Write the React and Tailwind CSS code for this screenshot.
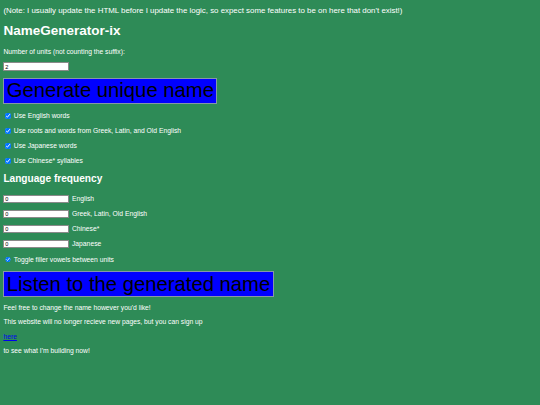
import React from 'react';

const Check = ({ label, first }) => (
    <div className={`flex items-center h-[8px] ${first ? 'mt-[8.3px]' : 'mt-[7px]'}`}>
        <input type="checkbox" defaultChecked className="w-[5.5px] h-[5.5px] ml-[1.7px] m-0" />
        <span className="ml-[3.2px]">{label}</span>
    </div>
);

const Freq = ({ label, first }) => (
    <div className={`flex items-center ${first ? 'mt-[10px]' : 'mt-[6.6px]'}`}>
        <input
            type="text"
            defaultValue="0"
            className="w-[66px] h-[8.4px] bg-white text-black border border-[#8a8a8a] px-[0.8px] text-[5.6px] leading-none"
        />
        <span className="ml-[2.6px]">{label}</span>
    </div>
);

const BigButton = ({ children, className }) => (
    <button className={`self-start bg-[#0000ff] text-black border border-[#8796a8] px-[2.4px] py-[0.3px] text-[20.25px] leading-[1.15] ${className}`}>
        {children}
    </button>
);

const App = () => {
    return (
        <div className="min-h-screen bg-[#2e8b57] text-white px-[3.4px] pt-[6.2px] flex flex-col font-['Liberation_Sans',Arial,sans-serif] text-[6.75px] leading-[1.15]">
            <p className="text-[7.9px]">(Note: I usually update the HTML before I update the logic, so expect some features to be on here that don't exist!)</p>
            <h1 className="mt-[8.1px] text-[13.5px] font-bold">NameGenerator-ix</h1>
            <p className="mt-[9px]">Number of units (not counting the suffix):</p>
            <input
                type="text"
                defaultValue="2"
                className="mt-[6.7px] w-[66px] h-[8.4px] bg-white text-black border border-[#8a8a8a] px-[0.8px] text-[5.6px] leading-none"
            />
            <BigButton className="mt-[7px]">Generate unique name</BigButton>

            <Check first label="Use English words" />
            <Check label="Use roots and words from Greek, Latin, and Old English" />
            <Check label="Use Japanese words" />
            <Check label="Use Chinese* syllables" />

            <h2 className="mt-[8.2px] text-[10.125px] font-bold">Language frequency</h2>
            <Freq first label="English" />
            <Freq label="Greek, Latin, Old English" />
            <Freq label="Chinese*" />
            <Freq label="Japanese" />

            <div className="flex items-center h-[8px] mt-[7.6px]">
                <input type="checkbox" defaultChecked className="w-[5.5px] h-[5.5px] ml-[1.7px] m-0" />
                <span className="ml-[3.2px]">Toggle filler vowels between units</span>
            </div>

            <BigButton className="mt-[7.6px]">Listen to the generated name</BigButton>

            <p className="mt-[6.5px]">Feel free to change the name however you'd like!</p>
            <p className="mt-[6.75px]">This website will no longer recieve new pages, but you can sign up</p>
            <p className="mt-[6.75px]"><a href="#" className="text-[#0000ee] underline">here</a></p>
            <p className="mt-[6.75px]">to see what I'm building now!</p>
        </div>
    );
};

export default App;
